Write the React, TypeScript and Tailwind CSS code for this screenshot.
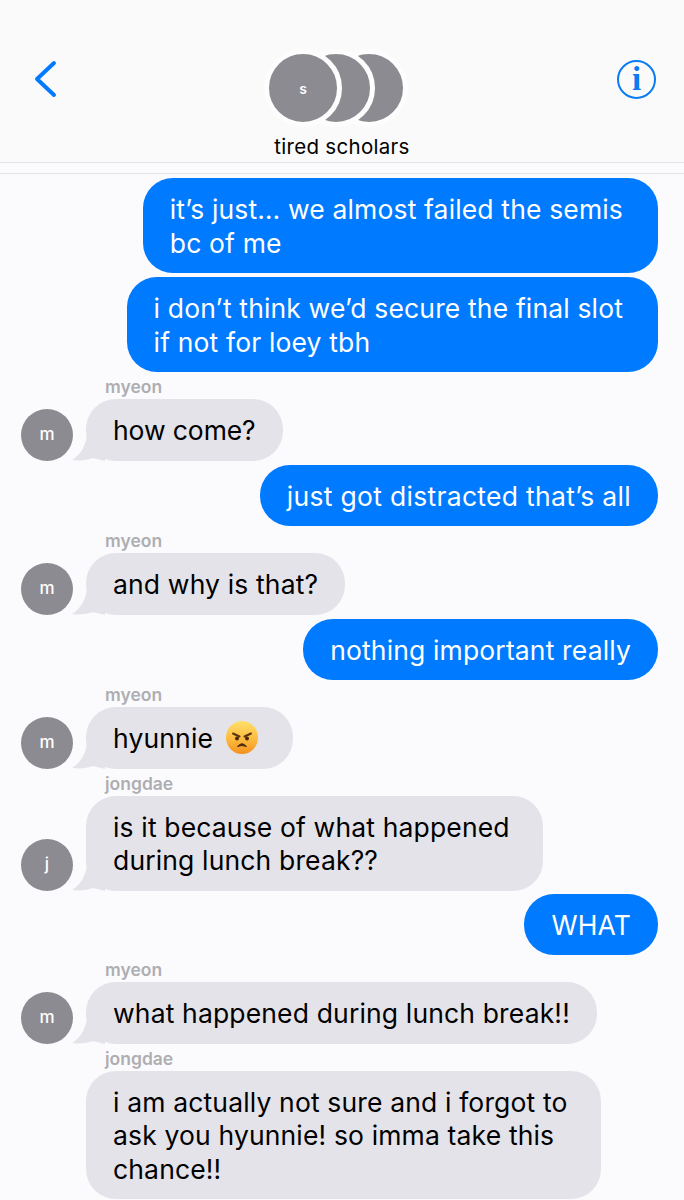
const fontBody = "font-['Inter','Liberation_Sans',sans-serif]";

function Outgoing({ lines, tight = false, spread = false }: { lines: string[]; tight?: boolean; spread?: boolean }) {
  return (
    <div className={`flex justify-end pr-[26px] ${tight ? "mt-[3px]" : "mt-1"}`}>
      <div
        className={`rounded-[30px] bg-[#007aff] pl-[27px] pt-[15px] pb-[13px] text-[26.5px] leading-[33.5px] text-white whitespace-nowrap ${
          spread ? "tracking-[0.3px]" : "tracking-[0.15px]"
        } ${lines.length > 1 ? "pr-[35px]" : "pr-[27px]"}`}
      >
        {lines.map((l) => (
          <div key={l}>{l}</div>
        ))}
      </div>
    </div>
  );
}

function Incoming({
  name,
  initial,
  avatar = true,
  wide = false,
  children,
}: {
  name: string;
  initial?: string;
  avatar?: boolean;
  wide?: boolean;
  children: React.ReactNode;
}) {
  return (
    <div className="mt-1">
      <div className="pl-[105px] h-[23px] text-[17.5px] leading-[21px] font-semibold text-[#aeaeb2]">{name}</div>
      <div className="flex items-end pl-[21px] gap-[13px]">
        {avatar ? (
          <div className="w-[52px] h-[52px] rounded-full bg-[#8c8b91] flex items-center justify-center text-[17px] font-medium text-white">
            {initial}
          </div>
        ) : (
          <div className="w-[52px] h-[52px]" />
        )}
        <div
          className={`relative rounded-[30px] bg-[#e5e3ea] pl-[27px] pt-[15px] pb-[13px] text-[26.5px] leading-[33.5px] tracking-[0.15px] text-black whitespace-nowrap ${
            wide ? "pr-[33px]" : "pr-[27px]"
          }`}
        >
          {avatar && (
            <svg className="absolute left-[-15px] bottom-0" width="34" height="28" viewBox="0 0 34 28">
              <path d="M16 0 C16 10 10 22 1 27 C10 28 16 27 22 25 L34 28 L34 0 Z" fill="#e5e3ea" />
            </svg>
          )}
          <div className="relative">{children}</div>
        </div>
      </div>
    </div>
  );
}

function AngryEmoji() {
  return (
    <svg className="inline-block align-[0px] my-[-6px] ml-[5px]" width="32" height="33" viewBox="0 0 32 33">
      <defs>
        <linearGradient id="face" x1="0" y1="0" x2="0" y2="1">
          <stop offset="0%" stopColor="#ffdf6a" />
          <stop offset="55%" stopColor="#fdbb3f" />
          <stop offset="100%" stopColor="#f3911f" />
        </linearGradient>
      </defs>
      <ellipse cx="16" cy="16.5" rx="16" ry="16.5" fill="url(#face)" />
      <path d="M7 12.5 L13.5 15.5 M25 12.5 L18.5 15.5" stroke="#5c3410" strokeWidth="2" strokeLinecap="round" />
      <circle cx="11" cy="17.5" r="2" fill="#4a2a0c" />
      <circle cx="21" cy="17.5" r="2" fill="#4a2a0c" />
      <path d="M11.5 25.5 Q16 20 20.5 25.5 Q16 23.5 11.5 25.5 Z" fill="#4a2a0c" stroke="#4a2a0c" strokeWidth="1" strokeLinejoin="round" />
    </svg>
  );
}

function Avatars() {
  return (
    <div className="mr-[12px] flex items-center">
      <div className="z-30 flex h-[78px] w-[78px] items-center justify-center rounded-full border-[5px] border-[#fdfdfe] bg-[#8c8b91] text-[14px] font-semibold text-white">
        s
      </div>
      <div className="z-20 ml-[-45px] h-[78px] w-[78px] rounded-full border-[5px] border-[#fdfdfe] bg-[#8c8b91]" />
      <div className="z-10 ml-[-45px] h-[78px] w-[78px] rounded-full border-[5px] border-[#fdfdfe] bg-[#8c8b91]" />
    </div>
  );
}

export default function App() {
  return (
    <div className={`${fontBody} h-[1200px] w-[684px] overflow-hidden bg-[#fbfbfd] text-black`}>
      <header className="relative flex h-[163px] flex-col items-center border-b border-[#e3e3e9] bg-[#fafafb] pt-[49px]">
        <svg className="absolute left-[33px] top-[60px]" width="26" height="38" viewBox="0 0 26 38">
          <path d="M21 3 L4 19 L21 35" fill="none" stroke="#007aff" strokeWidth="4" strokeLinecap="round" strokeLinejoin="round" />
        </svg>
        <Avatars />
        <div className="mt-[7px] text-[20.5px] leading-[26px] tracking-[0.3px]">tired scholars</div>
        <div className="absolute left-[617px] top-[60px] flex h-[39px] w-[39px] items-center justify-center rounded-full border-2 border-[#0a7cf0] font-['Liberation_Serif',serif] text-[33px] font-bold leading-none text-[#0a7cf0]">
          i
        </div>
      </header>
      <div className="mt-[10px] h-px bg-[#e3e3e9]" />
      <main>
        <div className="h-px" />
        <Outgoing lines={["it’s just… we almost failed the semis", "bc of me"]} tight />
        <Outgoing lines={["i don’t think we’d secure the final slot", "if not for loey tbh"]} />
        <Incoming name="myeon" initial="m">
          <span className="tracking-[-0.1px]">how come?</span>
        </Incoming>
        <Outgoing lines={["just got distracted that’s all"]} spread />
        <Incoming name="myeon" initial="m">and why is that?</Incoming>
        <Outgoing lines={["nothing important really"]} />
        <Incoming name="myeon" initial="m">
          hyunnie <AngryEmoji />
          <span className="inline-block w-[8px]" />
        </Incoming>
        <Incoming name="jongdae" initial="j" wide>
          <div>is it because of what happened</div>
          <div>during lunch break??</div>
        </Incoming>
        <Outgoing lines={["WHAT"]} tight />
        <Incoming name="myeon" initial="m">what happened during lunch break!!</Incoming>
        <Incoming name="jongdae" avatar={false} wide>
          <div>i am actually not sure and i forgot to</div>
          <div>ask you hyunnie! so imma take this</div>
          <div>chance!!</div>
        </Incoming>
      </main>
    </div>
  );
}
